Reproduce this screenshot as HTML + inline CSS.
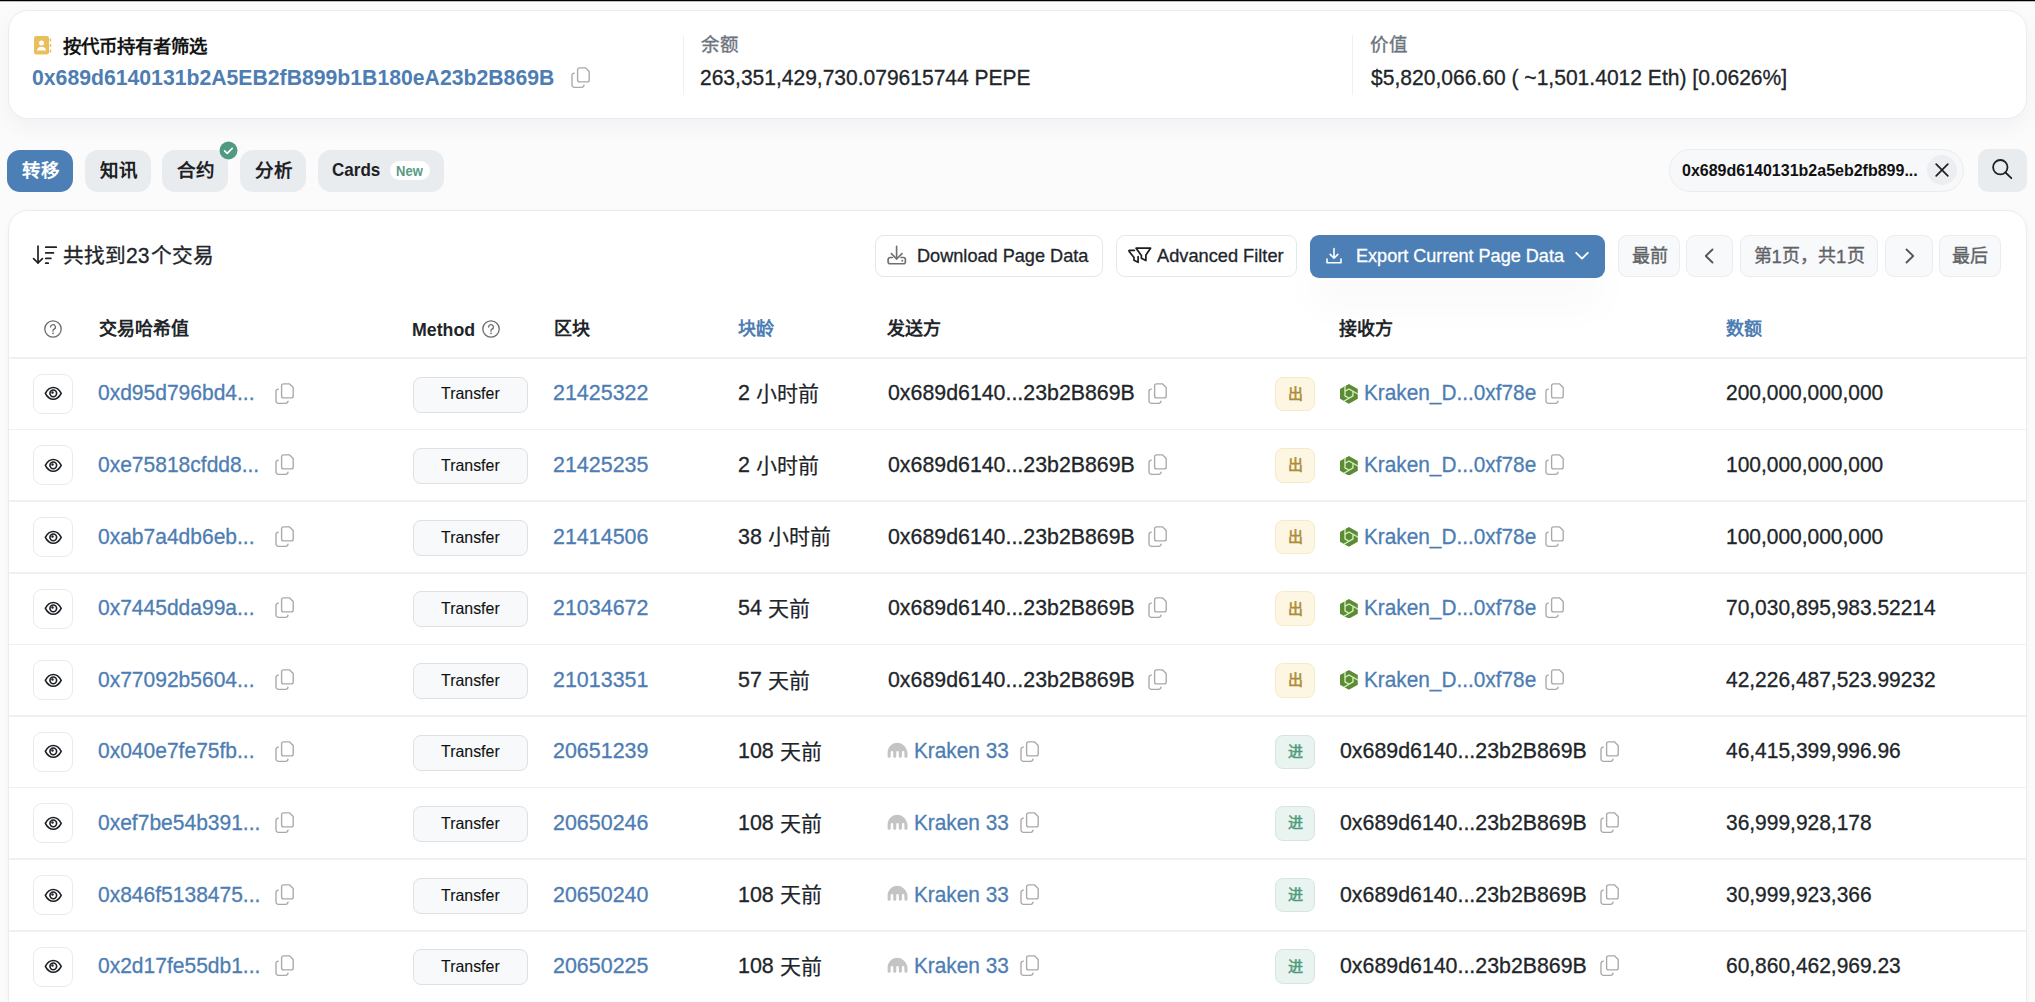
<!DOCTYPE html>
<html lang="zh-CN"><head><meta charset="utf-8"><title>Token Transfers</title>
<style>
*{box-sizing:border-box;margin:0;padding:0}
html,body{width:2035px;height:1002px;overflow:hidden}
body{background:#fbfbfc;font-family:"Liberation Sans", sans-serif;color:#212529;position:relative}
.a{position:absolute}
.t{position:absolute;white-space:nowrap;transform-origin:0 0}
</style></head><body>
<div class="a" style="left:0px;top:0px;width:2035px;height:1px;background:#000"></div>
<div class="a" style="left:0px;top:1px;width:2035px;height:1px;background:rgba(0,0,0,0.25)"></div>
<div class="a" style="left:8px;top:10px;width:2019px;height:109px;background:#fff;border:1px solid #eaecef;border-radius:20px;box-shadow:0 8px 22px rgba(20,30,40,0.045)"></div>
<svg class="a" style="left:34px;top:36px" width="18" height="19" viewBox="0 0 18 19" preserveAspectRatio="none"><rect x="0" y="0" width="15" height="18.5" rx="2.2" fill="#e9bf5c"/><rect x="15.6" y="2.5" width="1.6" height="3" rx="0.5" fill="#e9bf5c"/><rect x="15.6" y="8" width="1.6" height="3" rx="0.5" fill="#e9bf5c"/><rect x="15.6" y="13.5" width="1.6" height="3" rx="0.5" fill="#e9bf5c"/><circle cx="7.5" cy="7" r="2.5" fill="#fff"/><path d="M3 14.6c0-2.5 2-3.9 4.5-3.9s4.5 1.4 4.5 3.9z" fill="#fff"/></svg>
<div class="t" style="left:62.5px;top:37.80px;font-size:18.4px;line-height:18.4px;font-weight:700;color:#141414;">按代币持有者筛选</div>
<div class="t" style="left:32px;top:66.98px;font-size:22px;line-height:22px;font-weight:700;color:#4d7db3;transform:scaleX(0.964);">0x689d6140131b2A5EB2fB899b1B180eA23b2B869B</div>
<svg class="a" style="left:571px;top:67px" width="19" height="21" viewBox="0 0 19 21" preserveAspectRatio="none"><path d="M8.6 0.8H14.4L18.2 4.6V12.9A2 2 0 0 1 16.2 14.9H8.6A2 2 0 0 1 6.6 12.9V2.8A2 2 0 0 1 8.6 0.8Z" fill="none" stroke="#a9a9a9" stroke-width="1.35" stroke-linejoin="round"/><path d="M3.4 6.1A2.4 2.4 0 0 0 1 8.5V17.9A2.4 2.4 0 0 0 3.4 20.3H10.6A2.4 2.4 0 0 0 13 18.2" fill="none" stroke="#a9a9a9" stroke-width="1.35" stroke-linecap="round"/></svg>
<div class="a" style="left:682.5px;top:34.5px;width:1px;height:60px;background:#eef0f2"></div>
<div class="t" style="left:701px;top:36.19px;font-size:18.5px;line-height:18.5px;font-weight:400;color:#6c757d;-webkit-text-stroke:0.35px #6c757d;">余额</div>
<div class="t" style="left:700px;top:67.18px;font-size:22px;line-height:22px;font-weight:400;color:#212529;transform:scaleX(0.955);-webkit-text-stroke:0.3px #212529;">263,351,429,730.079615744 PEPE</div>
<div class="a" style="left:1351.5px;top:34.5px;width:1px;height:60px;background:#eef0f2"></div>
<div class="t" style="left:1370px;top:36.19px;font-size:18.5px;line-height:18.5px;font-weight:400;color:#6c757d;-webkit-text-stroke:0.35px #6c757d;">价值</div>
<div class="t" style="left:1370.5px;top:67.18px;font-size:22px;line-height:22px;font-weight:400;color:#212529;transform:scaleX(0.957);-webkit-text-stroke:0.3px #212529;">$5,820,066.60 ( ~1,501.4012 Eth) [0.0626%]</div>
<div class="a" style="left:7px;top:150px;width:66px;height:42px;background:#4b7fb6;border-radius:13px"></div>
<div class="t" style="left:22px;top:162.19px;font-size:18.5px;line-height:18.5px;font-weight:700;color:#fff;">转移</div>
<div class="a" style="left:85px;top:150px;width:66px;height:42px;background:#e9ecef;border-radius:13px"></div>
<div class="t" style="left:100px;top:162.19px;font-size:18.5px;line-height:18.5px;font-weight:700;color:#1d2125;">知讯</div>
<div class="a" style="left:162px;top:150px;width:66px;height:42px;background:#e9ecef;border-radius:13px"></div>
<div class="t" style="left:177px;top:162.19px;font-size:18.5px;line-height:18.5px;font-weight:700;color:#1d2125;">合约</div>
<div class="a" style="left:240px;top:150px;width:66px;height:42px;background:#e9ecef;border-radius:13px"></div>
<div class="t" style="left:255px;top:162.19px;font-size:18.5px;line-height:18.5px;font-weight:700;color:#1d2125;">分析</div>
<svg class="a" style="left:219px;top:141px" width="19" height="19" viewBox="0 0 19 19" preserveAspectRatio="none"><circle cx="9.5" cy="9.5" r="9" fill="#4f9a80"/><path d="M5.6 9.9l2.6 2.4 5-4.9" fill="none" stroke="#fff" stroke-width="1.7" stroke-linecap="round" stroke-linejoin="round"/></svg>
<div class="a" style="left:318px;top:150px;width:126px;height:42px;background:#e9ecef;border-radius:13px"></div>
<div class="t" style="left:332px;top:160.94px;font-size:18.5px;line-height:18.5px;font-weight:700;color:#1d2125;transform:scaleX(0.92);">Cards</div>
<div class="a" style="left:389.5px;top:161px;width:40px;height:19px;background:#fff;border-radius:10px"></div>
<div class="t" style="left:396px;top:163.55px;font-size:14px;line-height:14px;font-weight:700;color:#5a9a85;transform:scaleX(0.93);">New</div>
<div class="a" style="left:1669px;top:149px;width:295px;height:43px;background:#f7f8fa;border:1px solid #eaecef;border-radius:22px"></div>
<div class="t" style="left:1682px;top:163.06px;font-size:16px;line-height:16px;font-weight:700;color:#111;">0x689d6140131b2a5eb2fb899...</div>
<div class="a" style="left:1927px;top:155px;width:30px;height:30px;background:#eceef1;border-radius:15px"></div>
<svg class="a" style="left:1935px;top:163px" width="14" height="14" viewBox="0 0 14 14" preserveAspectRatio="none"><path d="M1.2 1.2l11.6 11.6M12.8 1.2L1.2 12.8" stroke="#1d2125" stroke-width="1.7" stroke-linecap="round"/></svg>
<div class="a" style="left:1978px;top:149px;width:49px;height:43px;background:#e9ecef;border-radius:10px"></div>
<svg class="a" style="left:1990px;top:157px" width="25" height="25" viewBox="0 0 25 25" preserveAspectRatio="none"><circle cx="10.3" cy="10.2" r="7.2" fill="none" stroke="#1d2125" stroke-width="1.8"/><path d="M15.5 15.5L21.3 21.2" stroke="#1d2125" stroke-width="1.8" stroke-linecap="round"/></svg>
<div class="a" style="left:8px;top:210px;width:2019px;height:830px;background:#fff;border:1px solid #eaecef;border-radius:20px;box-shadow:0 2px 6px rgba(30,40,60,0.035)"></div>
<svg class="a" style="left:32px;top:245px" width="26" height="20" viewBox="0 0 26 20" preserveAspectRatio="none"><path d="M6 1.2v17M1.6 13.6L6 18l4.4-4.4" fill="none" stroke="#222" stroke-width="1.7" stroke-linecap="round" stroke-linejoin="round"/><path d="M13.8 2.2h10.4M13.8 7.9h7.6M13.8 13.4h5M13.8 18.2h2.4" stroke="#222" stroke-width="1.8" stroke-linecap="round"/></svg>
<div class="t" style="left:63px;top:245.66px;font-size:20.7px;line-height:20.7px;font-weight:400;color:#212529;-webkit-text-stroke:0.3px #212529;">共找到</div>
<div class="t" style="left:126px;top:245.38px;font-size:22px;line-height:22px;font-weight:400;color:#212529;transform:scaleX(0.96);-webkit-text-stroke:0.3px #212529;">23</div>
<div class="t" style="left:151px;top:245.66px;font-size:20.7px;line-height:20.7px;font-weight:400;color:#212529;-webkit-text-stroke:0.3px #212529;">个交易</div>
<div class="a" style="left:874.5px;top:235px;width:228px;height:42px;background:#fff;border:1px solid #e4e6ea;border-radius:9px"></div>
<svg class="a" style="left:886px;top:245px" width="22" height="21" viewBox="0 0 22 21" preserveAspectRatio="none"><path d="M10.6 1.3V14.2M5.4 8.6l5.2 5.4 5.4-5.4" fill="none" stroke="#707070" stroke-width="1.65" stroke-linecap="round" stroke-linejoin="round"/><path d="M6.3 12.5H4.1A2 2 0 0 0 2.1 14.5V16.7A2 2 0 0 0 4.1 18.7H17.4A2 2 0 0 0 19.4 16.7V14.5A2 2 0 0 0 17.4 12.5H15" fill="none" stroke="#707070" stroke-width="1.65" stroke-linecap="round" stroke-linejoin="round"/><circle cx="16.3" cy="15.7" r="0.95" fill="#707070"/></svg>
<div class="t" style="left:917px;top:246.94px;font-size:18.5px;line-height:18.5px;font-weight:400;color:#212529;transform:scaleX(0.98);-webkit-text-stroke:0.3px #212529;">Download Page Data</div>
<div class="a" style="left:1116px;top:235px;width:181px;height:42px;background:#fff;border:1px solid #e4e6ea;border-radius:9px"></div>
<svg class="a" style="left:1127px;top:246px" width="26" height="19" viewBox="0 0 26 19" preserveAspectRatio="none"><path d="M9.1 2.2H23.6L18.9 8.9V14.6L14.4 12.2V9.6Z" fill="none" stroke="#1d1d1d" stroke-width="1.7" stroke-linejoin="round"/><path d="M7.4 4.3H2.6Q1.5 4.5 2.2 5.4L7 11.6V14.3L11.1 16.3V10.6" fill="none" stroke="#1d1d1d" stroke-width="1.7" stroke-linecap="round" stroke-linejoin="round"/></svg>
<div class="t" style="left:1156.5px;top:246.94px;font-size:18.5px;line-height:18.5px;font-weight:400;color:#212529;transform:scaleX(0.985);-webkit-text-stroke:0.3px #212529;">Advanced Filter</div>
<div class="a" style="left:1310px;top:235px;width:295px;height:42.5px;background:#4b7fb6;border-radius:9px;box-shadow:0 30px 40px rgba(0,0,0,0.025)"></div>
<svg class="a" style="left:1325px;top:247px" width="18" height="18" viewBox="0 0 18 18" preserveAspectRatio="none"><path d="M9 1.5v9.5M5.2 7.4L9 11.2l3.8-3.8" fill="none" stroke="#fff" stroke-width="1.6" stroke-linecap="round" stroke-linejoin="round"/><path d="M2 12v3.8h14V12" fill="none" stroke="#fff" stroke-width="1.6" stroke-linecap="round" stroke-linejoin="round"/></svg>
<div class="t" style="left:1355.5px;top:247.24px;font-size:18.5px;line-height:18.5px;font-weight:400;color:#fff;transform:scaleX(0.977);-webkit-text-stroke:0.3px #fff;">Export Current Page Data</div>
<svg class="a" style="left:1574px;top:250px" width="16" height="12" viewBox="0 0 16 12" preserveAspectRatio="none"><path d="M2.2 2.8l5.8 5.8 5.8-5.8" fill="none" stroke="#fff" stroke-width="1.8" stroke-linecap="round" stroke-linejoin="round"/></svg>
<div class="a" style="left:1618px;top:235px;width:62px;height:42px;background:#f8f9fa;border:1px solid #eaecef;border-radius:9px"></div>
<div class="t" style="left:1632px;top:246.90px;font-size:18px;line-height:18px;font-weight:400;color:#5f6368;-webkit-text-stroke:0.35px #5f6368;">最前</div>
<div class="a" style="left:1686px;top:235px;width:47px;height:42px;background:#f8f9fa;border:1px solid #eaecef;border-radius:9px"></div>
<svg class="a" style="left:1703px;top:248px" width="12" height="16" viewBox="0 0 12 16" preserveAspectRatio="none"><path d="M9.5 1.5L2.8 8l6.7 6.5" fill="none" stroke="#555" stroke-width="1.8" stroke-linecap="round" stroke-linejoin="round"/></svg>
<div class="a" style="left:1740px;top:235px;width:138px;height:42px;background:#f8f9fa;border:1px solid #eaecef;border-radius:9px"></div>
<div class="t" style="left:1753.5px;top:246.90px;font-size:18px;line-height:18px;font-weight:400;color:#5f6368;-webkit-text-stroke:0.35px #5f6368;">第</div>
<div class="t" style="left:1771.5px;top:247.54px;font-size:18.5px;line-height:18.5px;font-weight:400;color:#5f6368;-webkit-text-stroke:0.35px #5f6368;">1</div>
<div class="t" style="left:1782px;top:246.90px;font-size:18px;line-height:18px;font-weight:400;color:#5f6368;-webkit-text-stroke:0.35px #5f6368;">页，共</div>
<div class="t" style="left:1836px;top:247.54px;font-size:18.5px;line-height:18.5px;font-weight:400;color:#5f6368;-webkit-text-stroke:0.35px #5f6368;">1</div>
<div class="t" style="left:1847px;top:246.90px;font-size:18px;line-height:18px;font-weight:400;color:#5f6368;-webkit-text-stroke:0.35px #5f6368;">页</div>
<div class="a" style="left:1885px;top:235px;width:48px;height:42px;background:#f8f9fa;border:1px solid #eaecef;border-radius:9px"></div>
<svg class="a" style="left:1904px;top:248px" width="12" height="16" viewBox="0 0 12 16" preserveAspectRatio="none"><path d="M2.5 1.5L9.2 8l-6.7 6.5" fill="none" stroke="#555" stroke-width="1.8" stroke-linecap="round" stroke-linejoin="round"/></svg>
<div class="a" style="left:1939px;top:235px;width:62px;height:42px;background:#f8f9fa;border:1px solid #eaecef;border-radius:9px"></div>
<div class="t" style="left:1952px;top:246.90px;font-size:18px;line-height:18px;font-weight:400;color:#5f6368;-webkit-text-stroke:0.35px #5f6368;">最后</div>
<svg class="a" style="left:44px;top:319.5px" width="18" height="18" viewBox="0 0 18 18" preserveAspectRatio="none"><circle cx="9" cy="9" r="8.2" fill="none" stroke="#6b6b6b" stroke-width="1.3"/><path d="M6.6 7a2.4 2.4 0 1 1 3.4 2.2c-.7.3-1 .8-1 1.5v.5" fill="none" stroke="#6b6b6b" stroke-width="1.3" stroke-linecap="round"/><circle cx="9" cy="13.3" r=".85" fill="#6b6b6b"/></svg>
<div class="t" style="left:98.5px;top:319.60px;font-size:18px;line-height:18px;font-weight:700;color:#212529;">交易哈希值</div>
<div class="t" style="left:412px;top:319.62px;font-size:19px;line-height:19px;font-weight:700;color:#212529;transform:scaleX(0.935);">Method</div>
<svg class="a" style="left:481.5px;top:319.5px" width="18" height="18" viewBox="0 0 18 18" preserveAspectRatio="none"><circle cx="9" cy="9" r="8.2" fill="none" stroke="#6b6b6b" stroke-width="1.3"/><path d="M6.6 7a2.4 2.4 0 1 1 3.4 2.2c-.7.3-1 .8-1 1.5v.5" fill="none" stroke="#6b6b6b" stroke-width="1.3" stroke-linecap="round"/><circle cx="9" cy="13.3" r=".85" fill="#6b6b6b"/></svg>
<div class="t" style="left:554px;top:319.60px;font-size:18px;line-height:18px;font-weight:700;color:#212529;">区块</div>
<div class="t" style="left:738px;top:319.60px;font-size:18px;line-height:18px;font-weight:700;color:#4d7db3;">块龄</div>
<div class="t" style="left:887px;top:319.60px;font-size:18px;line-height:18px;font-weight:700;color:#212529;">发送方</div>
<div class="t" style="left:1339px;top:319.60px;font-size:18px;line-height:18px;font-weight:700;color:#212529;">接收方</div>
<div class="t" style="left:1726px;top:319.60px;font-size:18px;line-height:18px;font-weight:700;color:#4d7db3;">数额</div>
<div class="a" style="left:9px;top:357.25px;width:2017px;height:1.5px;background:#eef0f2"></div>
<div class="a" style="left:33px;top:373.8px;width:40px;height:40px;background:#fff;border:1px solid #ebebeb;border-radius:9px"></div>
<svg class="a" style="left:43.7px;top:386.40000000000003px" width="19" height="15.64" viewBox="0 0 17 14" preserveAspectRatio="none"><path d="M1.2 6.6C3 3.2 5.4 1.3 8.3 1.3s5.3 1.9 7.1 5.3c-1.8 3.4-4.2 5.3-7.1 5.3S3 10 1.2 6.6z" fill="none" stroke="#1d2125" stroke-width="1.45" stroke-linejoin="round"/><circle cx="8.3" cy="6.6" r="3" fill="none" stroke="#1d2125" stroke-width="1.45"/><circle cx="7.6" cy="5.9" r="1.1" fill="#1d2125"/></svg>
<div class="t" style="left:97.5px;top:382.38px;font-size:22px;line-height:22px;font-weight:400;color:#4d7db3;transform:scaleX(0.955);-webkit-text-stroke:0.3px #4d7db3;">0xd95d796bd4...</div>
<svg class="a" style="left:274.5px;top:382.5px" width="19" height="21" viewBox="0 0 19 21" preserveAspectRatio="none"><path d="M8.6 0.8H14.4L18.2 4.6V12.9A2 2 0 0 1 16.2 14.9H8.6A2 2 0 0 1 6.6 12.9V2.8A2 2 0 0 1 8.6 0.8Z" fill="none" stroke="#a9a9a9" stroke-width="1.35" stroke-linejoin="round"/><path d="M3.4 6.1A2.4 2.4 0 0 0 1 8.5V17.9A2.4 2.4 0 0 0 3.4 20.3H10.6A2.4 2.4 0 0 0 13 18.2" fill="none" stroke="#a9a9a9" stroke-width="1.35" stroke-linecap="round"/></svg>
<div class="a" style="left:413px;top:376.5px;width:115px;height:36px;background:#f8f9fa;border:1px solid #dde0e4;border-radius:8px"></div>
<div class="t" style="left:440.5px;top:385.43px;font-size:16.5px;line-height:16.5px;font-weight:400;color:#111;transform:scaleX(0.965);-webkit-text-stroke:0.1px #111;">Transfer</div>
<div class="t" style="left:552.5px;top:382.38px;font-size:22px;line-height:22px;font-weight:400;color:#4d7db3;transform:scaleX(0.975);-webkit-text-stroke:0.3px #4d7db3;">21425322</div>
<div class="t" style="left:738px;top:382.38px;font-size:22px;line-height:22px;font-weight:400;color:#212529;transform:scaleX(0.975);-webkit-text-stroke:0.3px #212529;">2</div>
<div class="t" style="left:755.5px;top:383.15px;font-size:21px;line-height:21px;font-weight:400;color:#212529;-webkit-text-stroke:0.2px #212529;">小时前</div>
<div class="t" style="left:887.5px;top:382.38px;font-size:22px;line-height:22px;font-weight:400;color:#212529;transform:scaleX(0.97);-webkit-text-stroke:0.3px #212529;">0x689d6140...23b2B869B</div>
<svg class="a" style="left:1147.5px;top:382.5px" width="19" height="21" viewBox="0 0 19 21" preserveAspectRatio="none"><path d="M8.6 0.8H14.4L18.2 4.6V12.9A2 2 0 0 1 16.2 14.9H8.6A2 2 0 0 1 6.6 12.9V2.8A2 2 0 0 1 8.6 0.8Z" fill="none" stroke="#a9a9a9" stroke-width="1.35" stroke-linejoin="round"/><path d="M3.4 6.1A2.4 2.4 0 0 0 1 8.5V17.9A2.4 2.4 0 0 0 3.4 20.3H10.6A2.4 2.4 0 0 0 13 18.2" fill="none" stroke="#a9a9a9" stroke-width="1.35" stroke-linecap="round"/></svg>
<div class="a" style="left:1274.5px;top:376.6px;width:40px;height:34.5px;background:#fdf6e2;border:1px solid #f5ebc8;border-radius:8px"></div>
<div class="t" style="left:1287.5px;top:385.75px;font-size:15px;line-height:15px;font-weight:400;color:#ac8c36;-webkit-text-stroke:0.55px #ac8c36;">出</div>
<svg class="a" style="left:1340.2px;top:383.95px" width="17.8" height="19.7" viewBox="0 0 17.8 19.7" preserveAspectRatio="none"><path d="M8.9 0L17.8 5V14.7L8.9 19.7L0 14.7V5Z" fill="#5c8b36"/><path d="M9 5L13 7.3V11.9L9 14.2L5 11.9V7.3Z" fill="none" stroke="#d8f4c2" stroke-width="1.3" stroke-linejoin="round"/><path d="M5 7.3V1.8M13 7.3L18.2 10.3M9 14.2L3.8 17.2" stroke="#d8f4c2" stroke-width="1.3"/></svg>
<div class="t" style="left:1364px;top:382.38px;font-size:22px;line-height:22px;font-weight:400;color:#4d7db3;transform:scaleX(0.945);-webkit-text-stroke:0.3px #4d7db3;">Kraken_D...0xf78e</div>
<svg class="a" style="left:1545px;top:382.5px" width="19" height="21" viewBox="0 0 19 21" preserveAspectRatio="none"><path d="M8.6 0.8H14.4L18.2 4.6V12.9A2 2 0 0 1 16.2 14.9H8.6A2 2 0 0 1 6.6 12.9V2.8A2 2 0 0 1 8.6 0.8Z" fill="none" stroke="#a9a9a9" stroke-width="1.35" stroke-linejoin="round"/><path d="M3.4 6.1A2.4 2.4 0 0 0 1 8.5V17.9A2.4 2.4 0 0 0 3.4 20.3H10.6A2.4 2.4 0 0 0 13 18.2" fill="none" stroke="#a9a9a9" stroke-width="1.35" stroke-linecap="round"/></svg>
<div class="t" style="left:1725.5px;top:382.38px;font-size:22px;line-height:22px;font-weight:400;color:#212529;transform:scaleX(0.952);-webkit-text-stroke:0.3px #212529;">200,000,000,000</div>
<div class="a" style="left:9px;top:428.85px;width:2017px;height:1.5px;background:#eef0f2"></div>
<div class="a" style="left:33px;top:445.4px;width:40px;height:40px;background:#fff;border:1px solid #ebebeb;border-radius:9px"></div>
<svg class="a" style="left:43.7px;top:458.0px" width="19" height="15.64" viewBox="0 0 17 14" preserveAspectRatio="none"><path d="M1.2 6.6C3 3.2 5.4 1.3 8.3 1.3s5.3 1.9 7.1 5.3c-1.8 3.4-4.2 5.3-7.1 5.3S3 10 1.2 6.6z" fill="none" stroke="#1d2125" stroke-width="1.45" stroke-linejoin="round"/><circle cx="8.3" cy="6.6" r="3" fill="none" stroke="#1d2125" stroke-width="1.45"/><circle cx="7.6" cy="5.9" r="1.1" fill="#1d2125"/></svg>
<div class="t" style="left:97.5px;top:453.98px;font-size:22px;line-height:22px;font-weight:400;color:#4d7db3;transform:scaleX(0.955);-webkit-text-stroke:0.3px #4d7db3;">0xe75818cfdd8...</div>
<svg class="a" style="left:274.5px;top:454.09999999999997px" width="19" height="21" viewBox="0 0 19 21" preserveAspectRatio="none"><path d="M8.6 0.8H14.4L18.2 4.6V12.9A2 2 0 0 1 16.2 14.9H8.6A2 2 0 0 1 6.6 12.9V2.8A2 2 0 0 1 8.6 0.8Z" fill="none" stroke="#a9a9a9" stroke-width="1.35" stroke-linejoin="round"/><path d="M3.4 6.1A2.4 2.4 0 0 0 1 8.5V17.9A2.4 2.4 0 0 0 3.4 20.3H10.6A2.4 2.4 0 0 0 13 18.2" fill="none" stroke="#a9a9a9" stroke-width="1.35" stroke-linecap="round"/></svg>
<div class="a" style="left:413px;top:448.09999999999997px;width:115px;height:36px;background:#f8f9fa;border:1px solid #dde0e4;border-radius:8px"></div>
<div class="t" style="left:440.5px;top:457.03px;font-size:16.5px;line-height:16.5px;font-weight:400;color:#111;transform:scaleX(0.965);-webkit-text-stroke:0.1px #111;">Transfer</div>
<div class="t" style="left:552.5px;top:453.98px;font-size:22px;line-height:22px;font-weight:400;color:#4d7db3;transform:scaleX(0.975);-webkit-text-stroke:0.3px #4d7db3;">21425235</div>
<div class="t" style="left:738px;top:453.98px;font-size:22px;line-height:22px;font-weight:400;color:#212529;transform:scaleX(0.975);-webkit-text-stroke:0.3px #212529;">2</div>
<div class="t" style="left:755.5px;top:454.75px;font-size:21px;line-height:21px;font-weight:400;color:#212529;-webkit-text-stroke:0.2px #212529;">小时前</div>
<div class="t" style="left:887.5px;top:453.98px;font-size:22px;line-height:22px;font-weight:400;color:#212529;transform:scaleX(0.97);-webkit-text-stroke:0.3px #212529;">0x689d6140...23b2B869B</div>
<svg class="a" style="left:1147.5px;top:454.09999999999997px" width="19" height="21" viewBox="0 0 19 21" preserveAspectRatio="none"><path d="M8.6 0.8H14.4L18.2 4.6V12.9A2 2 0 0 1 16.2 14.9H8.6A2 2 0 0 1 6.6 12.9V2.8A2 2 0 0 1 8.6 0.8Z" fill="none" stroke="#a9a9a9" stroke-width="1.35" stroke-linejoin="round"/><path d="M3.4 6.1A2.4 2.4 0 0 0 1 8.5V17.9A2.4 2.4 0 0 0 3.4 20.3H10.6A2.4 2.4 0 0 0 13 18.2" fill="none" stroke="#a9a9a9" stroke-width="1.35" stroke-linecap="round"/></svg>
<div class="a" style="left:1274.5px;top:448.2px;width:40px;height:34.5px;background:#fdf6e2;border:1px solid #f5ebc8;border-radius:8px"></div>
<div class="t" style="left:1287.5px;top:457.35px;font-size:15px;line-height:15px;font-weight:400;color:#ac8c36;-webkit-text-stroke:0.55px #ac8c36;">出</div>
<svg class="a" style="left:1340.2px;top:455.54999999999995px" width="17.8" height="19.7" viewBox="0 0 17.8 19.7" preserveAspectRatio="none"><path d="M8.9 0L17.8 5V14.7L8.9 19.7L0 14.7V5Z" fill="#5c8b36"/><path d="M9 5L13 7.3V11.9L9 14.2L5 11.9V7.3Z" fill="none" stroke="#d8f4c2" stroke-width="1.3" stroke-linejoin="round"/><path d="M5 7.3V1.8M13 7.3L18.2 10.3M9 14.2L3.8 17.2" stroke="#d8f4c2" stroke-width="1.3"/></svg>
<div class="t" style="left:1364px;top:453.98px;font-size:22px;line-height:22px;font-weight:400;color:#4d7db3;transform:scaleX(0.945);-webkit-text-stroke:0.3px #4d7db3;">Kraken_D...0xf78e</div>
<svg class="a" style="left:1545px;top:454.09999999999997px" width="19" height="21" viewBox="0 0 19 21" preserveAspectRatio="none"><path d="M8.6 0.8H14.4L18.2 4.6V12.9A2 2 0 0 1 16.2 14.9H8.6A2 2 0 0 1 6.6 12.9V2.8A2 2 0 0 1 8.6 0.8Z" fill="none" stroke="#a9a9a9" stroke-width="1.35" stroke-linejoin="round"/><path d="M3.4 6.1A2.4 2.4 0 0 0 1 8.5V17.9A2.4 2.4 0 0 0 3.4 20.3H10.6A2.4 2.4 0 0 0 13 18.2" fill="none" stroke="#a9a9a9" stroke-width="1.35" stroke-linecap="round"/></svg>
<div class="t" style="left:1725.5px;top:453.98px;font-size:22px;line-height:22px;font-weight:400;color:#212529;transform:scaleX(0.952);-webkit-text-stroke:0.3px #212529;">100,000,000,000</div>
<div class="a" style="left:9px;top:500.45px;width:2017px;height:1.5px;background:#eef0f2"></div>
<div class="a" style="left:33px;top:517.0px;width:40px;height:40px;background:#fff;border:1px solid #ebebeb;border-radius:9px"></div>
<svg class="a" style="left:43.7px;top:529.6px" width="19" height="15.64" viewBox="0 0 17 14" preserveAspectRatio="none"><path d="M1.2 6.6C3 3.2 5.4 1.3 8.3 1.3s5.3 1.9 7.1 5.3c-1.8 3.4-4.2 5.3-7.1 5.3S3 10 1.2 6.6z" fill="none" stroke="#1d2125" stroke-width="1.45" stroke-linejoin="round"/><circle cx="8.3" cy="6.6" r="3" fill="none" stroke="#1d2125" stroke-width="1.45"/><circle cx="7.6" cy="5.9" r="1.1" fill="#1d2125"/></svg>
<div class="t" style="left:97.5px;top:525.58px;font-size:22px;line-height:22px;font-weight:400;color:#4d7db3;transform:scaleX(0.955);-webkit-text-stroke:0.3px #4d7db3;">0xab7a4db6eb...</div>
<svg class="a" style="left:274.5px;top:525.7px" width="19" height="21" viewBox="0 0 19 21" preserveAspectRatio="none"><path d="M8.6 0.8H14.4L18.2 4.6V12.9A2 2 0 0 1 16.2 14.9H8.6A2 2 0 0 1 6.6 12.9V2.8A2 2 0 0 1 8.6 0.8Z" fill="none" stroke="#a9a9a9" stroke-width="1.35" stroke-linejoin="round"/><path d="M3.4 6.1A2.4 2.4 0 0 0 1 8.5V17.9A2.4 2.4 0 0 0 3.4 20.3H10.6A2.4 2.4 0 0 0 13 18.2" fill="none" stroke="#a9a9a9" stroke-width="1.35" stroke-linecap="round"/></svg>
<div class="a" style="left:413px;top:519.7px;width:115px;height:36px;background:#f8f9fa;border:1px solid #dde0e4;border-radius:8px"></div>
<div class="t" style="left:440.5px;top:528.63px;font-size:16.5px;line-height:16.5px;font-weight:400;color:#111;transform:scaleX(0.965);-webkit-text-stroke:0.1px #111;">Transfer</div>
<div class="t" style="left:552.5px;top:525.58px;font-size:22px;line-height:22px;font-weight:400;color:#4d7db3;transform:scaleX(0.975);-webkit-text-stroke:0.3px #4d7db3;">21414506</div>
<div class="t" style="left:738px;top:525.58px;font-size:22px;line-height:22px;font-weight:400;color:#212529;transform:scaleX(0.975);-webkit-text-stroke:0.3px #212529;">38</div>
<div class="t" style="left:767.7px;top:526.35px;font-size:21px;line-height:21px;font-weight:400;color:#212529;-webkit-text-stroke:0.2px #212529;">小时前</div>
<div class="t" style="left:887.5px;top:525.58px;font-size:22px;line-height:22px;font-weight:400;color:#212529;transform:scaleX(0.97);-webkit-text-stroke:0.3px #212529;">0x689d6140...23b2B869B</div>
<svg class="a" style="left:1147.5px;top:525.7px" width="19" height="21" viewBox="0 0 19 21" preserveAspectRatio="none"><path d="M8.6 0.8H14.4L18.2 4.6V12.9A2 2 0 0 1 16.2 14.9H8.6A2 2 0 0 1 6.6 12.9V2.8A2 2 0 0 1 8.6 0.8Z" fill="none" stroke="#a9a9a9" stroke-width="1.35" stroke-linejoin="round"/><path d="M3.4 6.1A2.4 2.4 0 0 0 1 8.5V17.9A2.4 2.4 0 0 0 3.4 20.3H10.6A2.4 2.4 0 0 0 13 18.2" fill="none" stroke="#a9a9a9" stroke-width="1.35" stroke-linecap="round"/></svg>
<div class="a" style="left:1274.5px;top:519.8px;width:40px;height:34.5px;background:#fdf6e2;border:1px solid #f5ebc8;border-radius:8px"></div>
<div class="t" style="left:1287.5px;top:528.95px;font-size:15px;line-height:15px;font-weight:400;color:#ac8c36;-webkit-text-stroke:0.55px #ac8c36;">出</div>
<svg class="a" style="left:1340.2px;top:527.15px" width="17.8" height="19.7" viewBox="0 0 17.8 19.7" preserveAspectRatio="none"><path d="M8.9 0L17.8 5V14.7L8.9 19.7L0 14.7V5Z" fill="#5c8b36"/><path d="M9 5L13 7.3V11.9L9 14.2L5 11.9V7.3Z" fill="none" stroke="#d8f4c2" stroke-width="1.3" stroke-linejoin="round"/><path d="M5 7.3V1.8M13 7.3L18.2 10.3M9 14.2L3.8 17.2" stroke="#d8f4c2" stroke-width="1.3"/></svg>
<div class="t" style="left:1364px;top:525.58px;font-size:22px;line-height:22px;font-weight:400;color:#4d7db3;transform:scaleX(0.945);-webkit-text-stroke:0.3px #4d7db3;">Kraken_D...0xf78e</div>
<svg class="a" style="left:1545px;top:525.7px" width="19" height="21" viewBox="0 0 19 21" preserveAspectRatio="none"><path d="M8.6 0.8H14.4L18.2 4.6V12.9A2 2 0 0 1 16.2 14.9H8.6A2 2 0 0 1 6.6 12.9V2.8A2 2 0 0 1 8.6 0.8Z" fill="none" stroke="#a9a9a9" stroke-width="1.35" stroke-linejoin="round"/><path d="M3.4 6.1A2.4 2.4 0 0 0 1 8.5V17.9A2.4 2.4 0 0 0 3.4 20.3H10.6A2.4 2.4 0 0 0 13 18.2" fill="none" stroke="#a9a9a9" stroke-width="1.35" stroke-linecap="round"/></svg>
<div class="t" style="left:1725.5px;top:525.58px;font-size:22px;line-height:22px;font-weight:400;color:#212529;transform:scaleX(0.952);-webkit-text-stroke:0.3px #212529;">100,000,000,000</div>
<div class="a" style="left:9px;top:572.05px;width:2017px;height:1.5px;background:#eef0f2"></div>
<div class="a" style="left:33px;top:588.5999999999999px;width:40px;height:40px;background:#fff;border:1px solid #ebebeb;border-radius:9px"></div>
<svg class="a" style="left:43.7px;top:601.1999999999999px" width="19" height="15.64" viewBox="0 0 17 14" preserveAspectRatio="none"><path d="M1.2 6.6C3 3.2 5.4 1.3 8.3 1.3s5.3 1.9 7.1 5.3c-1.8 3.4-4.2 5.3-7.1 5.3S3 10 1.2 6.6z" fill="none" stroke="#1d2125" stroke-width="1.45" stroke-linejoin="round"/><circle cx="8.3" cy="6.6" r="3" fill="none" stroke="#1d2125" stroke-width="1.45"/><circle cx="7.6" cy="5.9" r="1.1" fill="#1d2125"/></svg>
<div class="t" style="left:97.5px;top:597.18px;font-size:22px;line-height:22px;font-weight:400;color:#4d7db3;transform:scaleX(0.955);-webkit-text-stroke:0.3px #4d7db3;">0x7445dda99a...</div>
<svg class="a" style="left:274.5px;top:597.3px" width="19" height="21" viewBox="0 0 19 21" preserveAspectRatio="none"><path d="M8.6 0.8H14.4L18.2 4.6V12.9A2 2 0 0 1 16.2 14.9H8.6A2 2 0 0 1 6.6 12.9V2.8A2 2 0 0 1 8.6 0.8Z" fill="none" stroke="#a9a9a9" stroke-width="1.35" stroke-linejoin="round"/><path d="M3.4 6.1A2.4 2.4 0 0 0 1 8.5V17.9A2.4 2.4 0 0 0 3.4 20.3H10.6A2.4 2.4 0 0 0 13 18.2" fill="none" stroke="#a9a9a9" stroke-width="1.35" stroke-linecap="round"/></svg>
<div class="a" style="left:413px;top:591.3px;width:115px;height:36px;background:#f8f9fa;border:1px solid #dde0e4;border-radius:8px"></div>
<div class="t" style="left:440.5px;top:600.23px;font-size:16.5px;line-height:16.5px;font-weight:400;color:#111;transform:scaleX(0.965);-webkit-text-stroke:0.1px #111;">Transfer</div>
<div class="t" style="left:552.5px;top:597.18px;font-size:22px;line-height:22px;font-weight:400;color:#4d7db3;transform:scaleX(0.975);-webkit-text-stroke:0.3px #4d7db3;">21034672</div>
<div class="t" style="left:738px;top:597.18px;font-size:22px;line-height:22px;font-weight:400;color:#212529;transform:scaleX(0.975);-webkit-text-stroke:0.3px #212529;">54</div>
<div class="t" style="left:767.7px;top:597.95px;font-size:21px;line-height:21px;font-weight:400;color:#212529;-webkit-text-stroke:0.2px #212529;">天前</div>
<div class="t" style="left:887.5px;top:597.18px;font-size:22px;line-height:22px;font-weight:400;color:#212529;transform:scaleX(0.97);-webkit-text-stroke:0.3px #212529;">0x689d6140...23b2B869B</div>
<svg class="a" style="left:1147.5px;top:597.3px" width="19" height="21" viewBox="0 0 19 21" preserveAspectRatio="none"><path d="M8.6 0.8H14.4L18.2 4.6V12.9A2 2 0 0 1 16.2 14.9H8.6A2 2 0 0 1 6.6 12.9V2.8A2 2 0 0 1 8.6 0.8Z" fill="none" stroke="#a9a9a9" stroke-width="1.35" stroke-linejoin="round"/><path d="M3.4 6.1A2.4 2.4 0 0 0 1 8.5V17.9A2.4 2.4 0 0 0 3.4 20.3H10.6A2.4 2.4 0 0 0 13 18.2" fill="none" stroke="#a9a9a9" stroke-width="1.35" stroke-linecap="round"/></svg>
<div class="a" style="left:1274.5px;top:591.3999999999999px;width:40px;height:34.5px;background:#fdf6e2;border:1px solid #f5ebc8;border-radius:8px"></div>
<div class="t" style="left:1287.5px;top:600.55px;font-size:15px;line-height:15px;font-weight:400;color:#ac8c36;-webkit-text-stroke:0.55px #ac8c36;">出</div>
<svg class="a" style="left:1340.2px;top:598.7499999999999px" width="17.8" height="19.7" viewBox="0 0 17.8 19.7" preserveAspectRatio="none"><path d="M8.9 0L17.8 5V14.7L8.9 19.7L0 14.7V5Z" fill="#5c8b36"/><path d="M9 5L13 7.3V11.9L9 14.2L5 11.9V7.3Z" fill="none" stroke="#d8f4c2" stroke-width="1.3" stroke-linejoin="round"/><path d="M5 7.3V1.8M13 7.3L18.2 10.3M9 14.2L3.8 17.2" stroke="#d8f4c2" stroke-width="1.3"/></svg>
<div class="t" style="left:1364px;top:597.18px;font-size:22px;line-height:22px;font-weight:400;color:#4d7db3;transform:scaleX(0.945);-webkit-text-stroke:0.3px #4d7db3;">Kraken_D...0xf78e</div>
<svg class="a" style="left:1545px;top:597.3px" width="19" height="21" viewBox="0 0 19 21" preserveAspectRatio="none"><path d="M8.6 0.8H14.4L18.2 4.6V12.9A2 2 0 0 1 16.2 14.9H8.6A2 2 0 0 1 6.6 12.9V2.8A2 2 0 0 1 8.6 0.8Z" fill="none" stroke="#a9a9a9" stroke-width="1.35" stroke-linejoin="round"/><path d="M3.4 6.1A2.4 2.4 0 0 0 1 8.5V17.9A2.4 2.4 0 0 0 3.4 20.3H10.6A2.4 2.4 0 0 0 13 18.2" fill="none" stroke="#a9a9a9" stroke-width="1.35" stroke-linecap="round"/></svg>
<div class="t" style="left:1725.5px;top:597.18px;font-size:22px;line-height:22px;font-weight:400;color:#212529;transform:scaleX(0.952);-webkit-text-stroke:0.3px #212529;">70,030,895,983.52214</div>
<div class="a" style="left:9px;top:643.65px;width:2017px;height:1.5px;background:#eef0f2"></div>
<div class="a" style="left:33px;top:660.2px;width:40px;height:40px;background:#fff;border:1px solid #ebebeb;border-radius:9px"></div>
<svg class="a" style="left:43.7px;top:672.8000000000001px" width="19" height="15.64" viewBox="0 0 17 14" preserveAspectRatio="none"><path d="M1.2 6.6C3 3.2 5.4 1.3 8.3 1.3s5.3 1.9 7.1 5.3c-1.8 3.4-4.2 5.3-7.1 5.3S3 10 1.2 6.6z" fill="none" stroke="#1d2125" stroke-width="1.45" stroke-linejoin="round"/><circle cx="8.3" cy="6.6" r="3" fill="none" stroke="#1d2125" stroke-width="1.45"/><circle cx="7.6" cy="5.9" r="1.1" fill="#1d2125"/></svg>
<div class="t" style="left:97.5px;top:668.78px;font-size:22px;line-height:22px;font-weight:400;color:#4d7db3;transform:scaleX(0.955);-webkit-text-stroke:0.3px #4d7db3;">0x77092b5604...</div>
<svg class="a" style="left:274.5px;top:668.9000000000001px" width="19" height="21" viewBox="0 0 19 21" preserveAspectRatio="none"><path d="M8.6 0.8H14.4L18.2 4.6V12.9A2 2 0 0 1 16.2 14.9H8.6A2 2 0 0 1 6.6 12.9V2.8A2 2 0 0 1 8.6 0.8Z" fill="none" stroke="#a9a9a9" stroke-width="1.35" stroke-linejoin="round"/><path d="M3.4 6.1A2.4 2.4 0 0 0 1 8.5V17.9A2.4 2.4 0 0 0 3.4 20.3H10.6A2.4 2.4 0 0 0 13 18.2" fill="none" stroke="#a9a9a9" stroke-width="1.35" stroke-linecap="round"/></svg>
<div class="a" style="left:413px;top:662.9000000000001px;width:115px;height:36px;background:#f8f9fa;border:1px solid #dde0e4;border-radius:8px"></div>
<div class="t" style="left:440.5px;top:671.83px;font-size:16.5px;line-height:16.5px;font-weight:400;color:#111;transform:scaleX(0.965);-webkit-text-stroke:0.1px #111;">Transfer</div>
<div class="t" style="left:552.5px;top:668.78px;font-size:22px;line-height:22px;font-weight:400;color:#4d7db3;transform:scaleX(0.975);-webkit-text-stroke:0.3px #4d7db3;">21013351</div>
<div class="t" style="left:738px;top:668.78px;font-size:22px;line-height:22px;font-weight:400;color:#212529;transform:scaleX(0.975);-webkit-text-stroke:0.3px #212529;">57</div>
<div class="t" style="left:767.7px;top:669.55px;font-size:21px;line-height:21px;font-weight:400;color:#212529;-webkit-text-stroke:0.2px #212529;">天前</div>
<div class="t" style="left:887.5px;top:668.78px;font-size:22px;line-height:22px;font-weight:400;color:#212529;transform:scaleX(0.97);-webkit-text-stroke:0.3px #212529;">0x689d6140...23b2B869B</div>
<svg class="a" style="left:1147.5px;top:668.9000000000001px" width="19" height="21" viewBox="0 0 19 21" preserveAspectRatio="none"><path d="M8.6 0.8H14.4L18.2 4.6V12.9A2 2 0 0 1 16.2 14.9H8.6A2 2 0 0 1 6.6 12.9V2.8A2 2 0 0 1 8.6 0.8Z" fill="none" stroke="#a9a9a9" stroke-width="1.35" stroke-linejoin="round"/><path d="M3.4 6.1A2.4 2.4 0 0 0 1 8.5V17.9A2.4 2.4 0 0 0 3.4 20.3H10.6A2.4 2.4 0 0 0 13 18.2" fill="none" stroke="#a9a9a9" stroke-width="1.35" stroke-linecap="round"/></svg>
<div class="a" style="left:1274.5px;top:663.0px;width:40px;height:34.5px;background:#fdf6e2;border:1px solid #f5ebc8;border-radius:8px"></div>
<div class="t" style="left:1287.5px;top:672.15px;font-size:15px;line-height:15px;font-weight:400;color:#ac8c36;-webkit-text-stroke:0.55px #ac8c36;">出</div>
<svg class="a" style="left:1340.2px;top:670.35px" width="17.8" height="19.7" viewBox="0 0 17.8 19.7" preserveAspectRatio="none"><path d="M8.9 0L17.8 5V14.7L8.9 19.7L0 14.7V5Z" fill="#5c8b36"/><path d="M9 5L13 7.3V11.9L9 14.2L5 11.9V7.3Z" fill="none" stroke="#d8f4c2" stroke-width="1.3" stroke-linejoin="round"/><path d="M5 7.3V1.8M13 7.3L18.2 10.3M9 14.2L3.8 17.2" stroke="#d8f4c2" stroke-width="1.3"/></svg>
<div class="t" style="left:1364px;top:668.78px;font-size:22px;line-height:22px;font-weight:400;color:#4d7db3;transform:scaleX(0.945);-webkit-text-stroke:0.3px #4d7db3;">Kraken_D...0xf78e</div>
<svg class="a" style="left:1545px;top:668.9000000000001px" width="19" height="21" viewBox="0 0 19 21" preserveAspectRatio="none"><path d="M8.6 0.8H14.4L18.2 4.6V12.9A2 2 0 0 1 16.2 14.9H8.6A2 2 0 0 1 6.6 12.9V2.8A2 2 0 0 1 8.6 0.8Z" fill="none" stroke="#a9a9a9" stroke-width="1.35" stroke-linejoin="round"/><path d="M3.4 6.1A2.4 2.4 0 0 0 1 8.5V17.9A2.4 2.4 0 0 0 3.4 20.3H10.6A2.4 2.4 0 0 0 13 18.2" fill="none" stroke="#a9a9a9" stroke-width="1.35" stroke-linecap="round"/></svg>
<div class="t" style="left:1725.5px;top:668.78px;font-size:22px;line-height:22px;font-weight:400;color:#212529;transform:scaleX(0.952);-webkit-text-stroke:0.3px #212529;">42,226,487,523.99232</div>
<div class="a" style="left:9px;top:715.25px;width:2017px;height:1.5px;background:#eef0f2"></div>
<div class="a" style="left:33px;top:731.8px;width:40px;height:40px;background:#fff;border:1px solid #ebebeb;border-radius:9px"></div>
<svg class="a" style="left:43.7px;top:744.4px" width="19" height="15.64" viewBox="0 0 17 14" preserveAspectRatio="none"><path d="M1.2 6.6C3 3.2 5.4 1.3 8.3 1.3s5.3 1.9 7.1 5.3c-1.8 3.4-4.2 5.3-7.1 5.3S3 10 1.2 6.6z" fill="none" stroke="#1d2125" stroke-width="1.45" stroke-linejoin="round"/><circle cx="8.3" cy="6.6" r="3" fill="none" stroke="#1d2125" stroke-width="1.45"/><circle cx="7.6" cy="5.9" r="1.1" fill="#1d2125"/></svg>
<div class="t" style="left:97.5px;top:740.38px;font-size:22px;line-height:22px;font-weight:400;color:#4d7db3;transform:scaleX(0.955);-webkit-text-stroke:0.3px #4d7db3;">0x040e7fe75fb...</div>
<svg class="a" style="left:274.5px;top:740.5px" width="19" height="21" viewBox="0 0 19 21" preserveAspectRatio="none"><path d="M8.6 0.8H14.4L18.2 4.6V12.9A2 2 0 0 1 16.2 14.9H8.6A2 2 0 0 1 6.6 12.9V2.8A2 2 0 0 1 8.6 0.8Z" fill="none" stroke="#a9a9a9" stroke-width="1.35" stroke-linejoin="round"/><path d="M3.4 6.1A2.4 2.4 0 0 0 1 8.5V17.9A2.4 2.4 0 0 0 3.4 20.3H10.6A2.4 2.4 0 0 0 13 18.2" fill="none" stroke="#a9a9a9" stroke-width="1.35" stroke-linecap="round"/></svg>
<div class="a" style="left:413px;top:734.5px;width:115px;height:36px;background:#f8f9fa;border:1px solid #dde0e4;border-radius:8px"></div>
<div class="t" style="left:440.5px;top:743.43px;font-size:16.5px;line-height:16.5px;font-weight:400;color:#111;transform:scaleX(0.965);-webkit-text-stroke:0.1px #111;">Transfer</div>
<div class="t" style="left:552.5px;top:740.38px;font-size:22px;line-height:22px;font-weight:400;color:#4d7db3;transform:scaleX(0.975);-webkit-text-stroke:0.3px #4d7db3;">20651239</div>
<div class="t" style="left:738px;top:740.38px;font-size:22px;line-height:22px;font-weight:400;color:#212529;transform:scaleX(0.975);-webkit-text-stroke:0.3px #212529;">108</div>
<div class="t" style="left:779.9px;top:741.15px;font-size:21px;line-height:21px;font-weight:400;color:#212529;-webkit-text-stroke:0.2px #212529;">天前</div>
<svg class="a" style="left:887.3px;top:742.1999999999999px" width="20.4" height="16.3" viewBox="0 0 20.4 15.6" preserveAspectRatio="none"><path d="M10.2 0.6C4.8 0.6 0.6 4.9 0.6 10.1V13.6a1.55 1.55 0 0 0 3.1 0V9.9a1.25 1.25 0 0 1 2.5 0v3.7a1.55 1.55 0 0 0 3.1 0V9.9a1.25 1.25 0 0 1 2.5 0v3.7a1.55 1.55 0 0 0 3.1 0V9.9a1.25 1.25 0 0 1 2.5 0v3.7a1.55 1.55 0 0 0 3.1 0V10.1C19.8 4.9 15.6 0.6 10.2 0.6z" fill="#c4c4c4"/></svg>
<div class="t" style="left:913.5px;top:740.38px;font-size:22px;line-height:22px;font-weight:400;color:#4d7db3;transform:scaleX(0.945);-webkit-text-stroke:0.3px #4d7db3;">Kraken 33</div>
<svg class="a" style="left:1020px;top:740.5px" width="19" height="21" viewBox="0 0 19 21" preserveAspectRatio="none"><path d="M8.6 0.8H14.4L18.2 4.6V12.9A2 2 0 0 1 16.2 14.9H8.6A2 2 0 0 1 6.6 12.9V2.8A2 2 0 0 1 8.6 0.8Z" fill="none" stroke="#a9a9a9" stroke-width="1.35" stroke-linejoin="round"/><path d="M3.4 6.1A2.4 2.4 0 0 0 1 8.5V17.9A2.4 2.4 0 0 0 3.4 20.3H10.6A2.4 2.4 0 0 0 13 18.2" fill="none" stroke="#a9a9a9" stroke-width="1.35" stroke-linecap="round"/></svg>
<div class="a" style="left:1274.5px;top:734.5999999999999px;width:40px;height:34.5px;background:#e9f3ef;border:1px solid #d5e6de;border-radius:8px"></div>
<div class="t" style="left:1287.5px;top:743.75px;font-size:15px;line-height:15px;font-weight:400;color:#4f9a7c;-webkit-text-stroke:0.55px #4f9a7c;">进</div>
<div class="t" style="left:1339.5px;top:740.38px;font-size:22px;line-height:22px;font-weight:400;color:#212529;transform:scaleX(0.97);-webkit-text-stroke:0.3px #212529;">0x689d6140...23b2B869B</div>
<svg class="a" style="left:1599.5px;top:740.5px" width="19" height="21" viewBox="0 0 19 21" preserveAspectRatio="none"><path d="M8.6 0.8H14.4L18.2 4.6V12.9A2 2 0 0 1 16.2 14.9H8.6A2 2 0 0 1 6.6 12.9V2.8A2 2 0 0 1 8.6 0.8Z" fill="none" stroke="#a9a9a9" stroke-width="1.35" stroke-linejoin="round"/><path d="M3.4 6.1A2.4 2.4 0 0 0 1 8.5V17.9A2.4 2.4 0 0 0 3.4 20.3H10.6A2.4 2.4 0 0 0 13 18.2" fill="none" stroke="#a9a9a9" stroke-width="1.35" stroke-linecap="round"/></svg>
<div class="t" style="left:1725.5px;top:740.38px;font-size:22px;line-height:22px;font-weight:400;color:#212529;transform:scaleX(0.952);-webkit-text-stroke:0.3px #212529;">46,415,399,996.96</div>
<div class="a" style="left:9px;top:786.8499999999999px;width:2017px;height:1.5px;background:#eef0f2"></div>
<div class="a" style="left:33px;top:803.4px;width:40px;height:40px;background:#fff;border:1px solid #ebebeb;border-radius:9px"></div>
<svg class="a" style="left:43.7px;top:816.0px" width="19" height="15.64" viewBox="0 0 17 14" preserveAspectRatio="none"><path d="M1.2 6.6C3 3.2 5.4 1.3 8.3 1.3s5.3 1.9 7.1 5.3c-1.8 3.4-4.2 5.3-7.1 5.3S3 10 1.2 6.6z" fill="none" stroke="#1d2125" stroke-width="1.45" stroke-linejoin="round"/><circle cx="8.3" cy="6.6" r="3" fill="none" stroke="#1d2125" stroke-width="1.45"/><circle cx="7.6" cy="5.9" r="1.1" fill="#1d2125"/></svg>
<div class="t" style="left:97.5px;top:811.98px;font-size:22px;line-height:22px;font-weight:400;color:#4d7db3;transform:scaleX(0.955);-webkit-text-stroke:0.3px #4d7db3;">0xef7be54b391...</div>
<svg class="a" style="left:274.5px;top:812.1px" width="19" height="21" viewBox="0 0 19 21" preserveAspectRatio="none"><path d="M8.6 0.8H14.4L18.2 4.6V12.9A2 2 0 0 1 16.2 14.9H8.6A2 2 0 0 1 6.6 12.9V2.8A2 2 0 0 1 8.6 0.8Z" fill="none" stroke="#a9a9a9" stroke-width="1.35" stroke-linejoin="round"/><path d="M3.4 6.1A2.4 2.4 0 0 0 1 8.5V17.9A2.4 2.4 0 0 0 3.4 20.3H10.6A2.4 2.4 0 0 0 13 18.2" fill="none" stroke="#a9a9a9" stroke-width="1.35" stroke-linecap="round"/></svg>
<div class="a" style="left:413px;top:806.1px;width:115px;height:36px;background:#f8f9fa;border:1px solid #dde0e4;border-radius:8px"></div>
<div class="t" style="left:440.5px;top:815.03px;font-size:16.5px;line-height:16.5px;font-weight:400;color:#111;transform:scaleX(0.965);-webkit-text-stroke:0.1px #111;">Transfer</div>
<div class="t" style="left:552.5px;top:811.98px;font-size:22px;line-height:22px;font-weight:400;color:#4d7db3;transform:scaleX(0.975);-webkit-text-stroke:0.3px #4d7db3;">20650246</div>
<div class="t" style="left:738px;top:811.98px;font-size:22px;line-height:22px;font-weight:400;color:#212529;transform:scaleX(0.975);-webkit-text-stroke:0.3px #212529;">108</div>
<div class="t" style="left:779.9px;top:812.75px;font-size:21px;line-height:21px;font-weight:400;color:#212529;-webkit-text-stroke:0.2px #212529;">天前</div>
<svg class="a" style="left:887.3px;top:813.8px" width="20.4" height="16.3" viewBox="0 0 20.4 15.6" preserveAspectRatio="none"><path d="M10.2 0.6C4.8 0.6 0.6 4.9 0.6 10.1V13.6a1.55 1.55 0 0 0 3.1 0V9.9a1.25 1.25 0 0 1 2.5 0v3.7a1.55 1.55 0 0 0 3.1 0V9.9a1.25 1.25 0 0 1 2.5 0v3.7a1.55 1.55 0 0 0 3.1 0V9.9a1.25 1.25 0 0 1 2.5 0v3.7a1.55 1.55 0 0 0 3.1 0V10.1C19.8 4.9 15.6 0.6 10.2 0.6z" fill="#c4c4c4"/></svg>
<div class="t" style="left:913.5px;top:811.98px;font-size:22px;line-height:22px;font-weight:400;color:#4d7db3;transform:scaleX(0.945);-webkit-text-stroke:0.3px #4d7db3;">Kraken 33</div>
<svg class="a" style="left:1020px;top:812.1px" width="19" height="21" viewBox="0 0 19 21" preserveAspectRatio="none"><path d="M8.6 0.8H14.4L18.2 4.6V12.9A2 2 0 0 1 16.2 14.9H8.6A2 2 0 0 1 6.6 12.9V2.8A2 2 0 0 1 8.6 0.8Z" fill="none" stroke="#a9a9a9" stroke-width="1.35" stroke-linejoin="round"/><path d="M3.4 6.1A2.4 2.4 0 0 0 1 8.5V17.9A2.4 2.4 0 0 0 3.4 20.3H10.6A2.4 2.4 0 0 0 13 18.2" fill="none" stroke="#a9a9a9" stroke-width="1.35" stroke-linecap="round"/></svg>
<div class="a" style="left:1274.5px;top:806.1999999999999px;width:40px;height:34.5px;background:#e9f3ef;border:1px solid #d5e6de;border-radius:8px"></div>
<div class="t" style="left:1287.5px;top:815.35px;font-size:15px;line-height:15px;font-weight:400;color:#4f9a7c;-webkit-text-stroke:0.55px #4f9a7c;">进</div>
<div class="t" style="left:1339.5px;top:811.98px;font-size:22px;line-height:22px;font-weight:400;color:#212529;transform:scaleX(0.97);-webkit-text-stroke:0.3px #212529;">0x689d6140...23b2B869B</div>
<svg class="a" style="left:1599.5px;top:812.1px" width="19" height="21" viewBox="0 0 19 21" preserveAspectRatio="none"><path d="M8.6 0.8H14.4L18.2 4.6V12.9A2 2 0 0 1 16.2 14.9H8.6A2 2 0 0 1 6.6 12.9V2.8A2 2 0 0 1 8.6 0.8Z" fill="none" stroke="#a9a9a9" stroke-width="1.35" stroke-linejoin="round"/><path d="M3.4 6.1A2.4 2.4 0 0 0 1 8.5V17.9A2.4 2.4 0 0 0 3.4 20.3H10.6A2.4 2.4 0 0 0 13 18.2" fill="none" stroke="#a9a9a9" stroke-width="1.35" stroke-linecap="round"/></svg>
<div class="t" style="left:1725.5px;top:811.98px;font-size:22px;line-height:22px;font-weight:400;color:#212529;transform:scaleX(0.952);-webkit-text-stroke:0.3px #212529;">36,999,928,178</div>
<div class="a" style="left:9px;top:858.4499999999999px;width:2017px;height:1.5px;background:#eef0f2"></div>
<div class="a" style="left:33px;top:875.0px;width:40px;height:40px;background:#fff;border:1px solid #ebebeb;border-radius:9px"></div>
<svg class="a" style="left:43.7px;top:887.6px" width="19" height="15.64" viewBox="0 0 17 14" preserveAspectRatio="none"><path d="M1.2 6.6C3 3.2 5.4 1.3 8.3 1.3s5.3 1.9 7.1 5.3c-1.8 3.4-4.2 5.3-7.1 5.3S3 10 1.2 6.6z" fill="none" stroke="#1d2125" stroke-width="1.45" stroke-linejoin="round"/><circle cx="8.3" cy="6.6" r="3" fill="none" stroke="#1d2125" stroke-width="1.45"/><circle cx="7.6" cy="5.9" r="1.1" fill="#1d2125"/></svg>
<div class="t" style="left:97.5px;top:883.58px;font-size:22px;line-height:22px;font-weight:400;color:#4d7db3;transform:scaleX(0.955);-webkit-text-stroke:0.3px #4d7db3;">0x846f5138475...</div>
<svg class="a" style="left:274.5px;top:883.7px" width="19" height="21" viewBox="0 0 19 21" preserveAspectRatio="none"><path d="M8.6 0.8H14.4L18.2 4.6V12.9A2 2 0 0 1 16.2 14.9H8.6A2 2 0 0 1 6.6 12.9V2.8A2 2 0 0 1 8.6 0.8Z" fill="none" stroke="#a9a9a9" stroke-width="1.35" stroke-linejoin="round"/><path d="M3.4 6.1A2.4 2.4 0 0 0 1 8.5V17.9A2.4 2.4 0 0 0 3.4 20.3H10.6A2.4 2.4 0 0 0 13 18.2" fill="none" stroke="#a9a9a9" stroke-width="1.35" stroke-linecap="round"/></svg>
<div class="a" style="left:413px;top:877.7px;width:115px;height:36px;background:#f8f9fa;border:1px solid #dde0e4;border-radius:8px"></div>
<div class="t" style="left:440.5px;top:886.63px;font-size:16.5px;line-height:16.5px;font-weight:400;color:#111;transform:scaleX(0.965);-webkit-text-stroke:0.1px #111;">Transfer</div>
<div class="t" style="left:552.5px;top:883.58px;font-size:22px;line-height:22px;font-weight:400;color:#4d7db3;transform:scaleX(0.975);-webkit-text-stroke:0.3px #4d7db3;">20650240</div>
<div class="t" style="left:738px;top:883.58px;font-size:22px;line-height:22px;font-weight:400;color:#212529;transform:scaleX(0.975);-webkit-text-stroke:0.3px #212529;">108</div>
<div class="t" style="left:779.9px;top:884.35px;font-size:21px;line-height:21px;font-weight:400;color:#212529;-webkit-text-stroke:0.2px #212529;">天前</div>
<svg class="a" style="left:887.3px;top:885.4px" width="20.4" height="16.3" viewBox="0 0 20.4 15.6" preserveAspectRatio="none"><path d="M10.2 0.6C4.8 0.6 0.6 4.9 0.6 10.1V13.6a1.55 1.55 0 0 0 3.1 0V9.9a1.25 1.25 0 0 1 2.5 0v3.7a1.55 1.55 0 0 0 3.1 0V9.9a1.25 1.25 0 0 1 2.5 0v3.7a1.55 1.55 0 0 0 3.1 0V9.9a1.25 1.25 0 0 1 2.5 0v3.7a1.55 1.55 0 0 0 3.1 0V10.1C19.8 4.9 15.6 0.6 10.2 0.6z" fill="#c4c4c4"/></svg>
<div class="t" style="left:913.5px;top:883.58px;font-size:22px;line-height:22px;font-weight:400;color:#4d7db3;transform:scaleX(0.945);-webkit-text-stroke:0.3px #4d7db3;">Kraken 33</div>
<svg class="a" style="left:1020px;top:883.7px" width="19" height="21" viewBox="0 0 19 21" preserveAspectRatio="none"><path d="M8.6 0.8H14.4L18.2 4.6V12.9A2 2 0 0 1 16.2 14.9H8.6A2 2 0 0 1 6.6 12.9V2.8A2 2 0 0 1 8.6 0.8Z" fill="none" stroke="#a9a9a9" stroke-width="1.35" stroke-linejoin="round"/><path d="M3.4 6.1A2.4 2.4 0 0 0 1 8.5V17.9A2.4 2.4 0 0 0 3.4 20.3H10.6A2.4 2.4 0 0 0 13 18.2" fill="none" stroke="#a9a9a9" stroke-width="1.35" stroke-linecap="round"/></svg>
<div class="a" style="left:1274.5px;top:877.8px;width:40px;height:34.5px;background:#e9f3ef;border:1px solid #d5e6de;border-radius:8px"></div>
<div class="t" style="left:1287.5px;top:886.95px;font-size:15px;line-height:15px;font-weight:400;color:#4f9a7c;-webkit-text-stroke:0.55px #4f9a7c;">进</div>
<div class="t" style="left:1339.5px;top:883.58px;font-size:22px;line-height:22px;font-weight:400;color:#212529;transform:scaleX(0.97);-webkit-text-stroke:0.3px #212529;">0x689d6140...23b2B869B</div>
<svg class="a" style="left:1599.5px;top:883.7px" width="19" height="21" viewBox="0 0 19 21" preserveAspectRatio="none"><path d="M8.6 0.8H14.4L18.2 4.6V12.9A2 2 0 0 1 16.2 14.9H8.6A2 2 0 0 1 6.6 12.9V2.8A2 2 0 0 1 8.6 0.8Z" fill="none" stroke="#a9a9a9" stroke-width="1.35" stroke-linejoin="round"/><path d="M3.4 6.1A2.4 2.4 0 0 0 1 8.5V17.9A2.4 2.4 0 0 0 3.4 20.3H10.6A2.4 2.4 0 0 0 13 18.2" fill="none" stroke="#a9a9a9" stroke-width="1.35" stroke-linecap="round"/></svg>
<div class="t" style="left:1725.5px;top:883.58px;font-size:22px;line-height:22px;font-weight:400;color:#212529;transform:scaleX(0.952);-webkit-text-stroke:0.3px #212529;">30,999,923,366</div>
<div class="a" style="left:9px;top:930.05px;width:2017px;height:1.5px;background:#eef0f2"></div>
<div class="a" style="left:33px;top:946.5999999999999px;width:40px;height:40px;background:#fff;border:1px solid #ebebeb;border-radius:9px"></div>
<svg class="a" style="left:43.7px;top:959.1999999999999px" width="19" height="15.64" viewBox="0 0 17 14" preserveAspectRatio="none"><path d="M1.2 6.6C3 3.2 5.4 1.3 8.3 1.3s5.3 1.9 7.1 5.3c-1.8 3.4-4.2 5.3-7.1 5.3S3 10 1.2 6.6z" fill="none" stroke="#1d2125" stroke-width="1.45" stroke-linejoin="round"/><circle cx="8.3" cy="6.6" r="3" fill="none" stroke="#1d2125" stroke-width="1.45"/><circle cx="7.6" cy="5.9" r="1.1" fill="#1d2125"/></svg>
<div class="t" style="left:97.5px;top:955.18px;font-size:22px;line-height:22px;font-weight:400;color:#4d7db3;transform:scaleX(0.955);-webkit-text-stroke:0.3px #4d7db3;">0x2d17fe55db1...</div>
<svg class="a" style="left:274.5px;top:955.3px" width="19" height="21" viewBox="0 0 19 21" preserveAspectRatio="none"><path d="M8.6 0.8H14.4L18.2 4.6V12.9A2 2 0 0 1 16.2 14.9H8.6A2 2 0 0 1 6.6 12.9V2.8A2 2 0 0 1 8.6 0.8Z" fill="none" stroke="#a9a9a9" stroke-width="1.35" stroke-linejoin="round"/><path d="M3.4 6.1A2.4 2.4 0 0 0 1 8.5V17.9A2.4 2.4 0 0 0 3.4 20.3H10.6A2.4 2.4 0 0 0 13 18.2" fill="none" stroke="#a9a9a9" stroke-width="1.35" stroke-linecap="round"/></svg>
<div class="a" style="left:413px;top:949.3px;width:115px;height:36px;background:#f8f9fa;border:1px solid #dde0e4;border-radius:8px"></div>
<div class="t" style="left:440.5px;top:958.23px;font-size:16.5px;line-height:16.5px;font-weight:400;color:#111;transform:scaleX(0.965);-webkit-text-stroke:0.1px #111;">Transfer</div>
<div class="t" style="left:552.5px;top:955.18px;font-size:22px;line-height:22px;font-weight:400;color:#4d7db3;transform:scaleX(0.975);-webkit-text-stroke:0.3px #4d7db3;">20650225</div>
<div class="t" style="left:738px;top:955.18px;font-size:22px;line-height:22px;font-weight:400;color:#212529;transform:scaleX(0.975);-webkit-text-stroke:0.3px #212529;">108</div>
<div class="t" style="left:779.9px;top:955.95px;font-size:21px;line-height:21px;font-weight:400;color:#212529;-webkit-text-stroke:0.2px #212529;">天前</div>
<svg class="a" style="left:887.3px;top:956.9999999999999px" width="20.4" height="16.3" viewBox="0 0 20.4 15.6" preserveAspectRatio="none"><path d="M10.2 0.6C4.8 0.6 0.6 4.9 0.6 10.1V13.6a1.55 1.55 0 0 0 3.1 0V9.9a1.25 1.25 0 0 1 2.5 0v3.7a1.55 1.55 0 0 0 3.1 0V9.9a1.25 1.25 0 0 1 2.5 0v3.7a1.55 1.55 0 0 0 3.1 0V9.9a1.25 1.25 0 0 1 2.5 0v3.7a1.55 1.55 0 0 0 3.1 0V10.1C19.8 4.9 15.6 0.6 10.2 0.6z" fill="#c4c4c4"/></svg>
<div class="t" style="left:913.5px;top:955.18px;font-size:22px;line-height:22px;font-weight:400;color:#4d7db3;transform:scaleX(0.945);-webkit-text-stroke:0.3px #4d7db3;">Kraken 33</div>
<svg class="a" style="left:1020px;top:955.3px" width="19" height="21" viewBox="0 0 19 21" preserveAspectRatio="none"><path d="M8.6 0.8H14.4L18.2 4.6V12.9A2 2 0 0 1 16.2 14.9H8.6A2 2 0 0 1 6.6 12.9V2.8A2 2 0 0 1 8.6 0.8Z" fill="none" stroke="#a9a9a9" stroke-width="1.35" stroke-linejoin="round"/><path d="M3.4 6.1A2.4 2.4 0 0 0 1 8.5V17.9A2.4 2.4 0 0 0 3.4 20.3H10.6A2.4 2.4 0 0 0 13 18.2" fill="none" stroke="#a9a9a9" stroke-width="1.35" stroke-linecap="round"/></svg>
<div class="a" style="left:1274.5px;top:949.3999999999999px;width:40px;height:34.5px;background:#e9f3ef;border:1px solid #d5e6de;border-radius:8px"></div>
<div class="t" style="left:1287.5px;top:958.55px;font-size:15px;line-height:15px;font-weight:400;color:#4f9a7c;-webkit-text-stroke:0.55px #4f9a7c;">进</div>
<div class="t" style="left:1339.5px;top:955.18px;font-size:22px;line-height:22px;font-weight:400;color:#212529;transform:scaleX(0.97);-webkit-text-stroke:0.3px #212529;">0x689d6140...23b2B869B</div>
<svg class="a" style="left:1599.5px;top:955.3px" width="19" height="21" viewBox="0 0 19 21" preserveAspectRatio="none"><path d="M8.6 0.8H14.4L18.2 4.6V12.9A2 2 0 0 1 16.2 14.9H8.6A2 2 0 0 1 6.6 12.9V2.8A2 2 0 0 1 8.6 0.8Z" fill="none" stroke="#a9a9a9" stroke-width="1.35" stroke-linejoin="round"/><path d="M3.4 6.1A2.4 2.4 0 0 0 1 8.5V17.9A2.4 2.4 0 0 0 3.4 20.3H10.6A2.4 2.4 0 0 0 13 18.2" fill="none" stroke="#a9a9a9" stroke-width="1.35" stroke-linecap="round"/></svg>
<div class="t" style="left:1725.5px;top:955.18px;font-size:22px;line-height:22px;font-weight:400;color:#212529;transform:scaleX(0.952);-webkit-text-stroke:0.3px #212529;">60,860,462,969.23</div>
</body></html>
